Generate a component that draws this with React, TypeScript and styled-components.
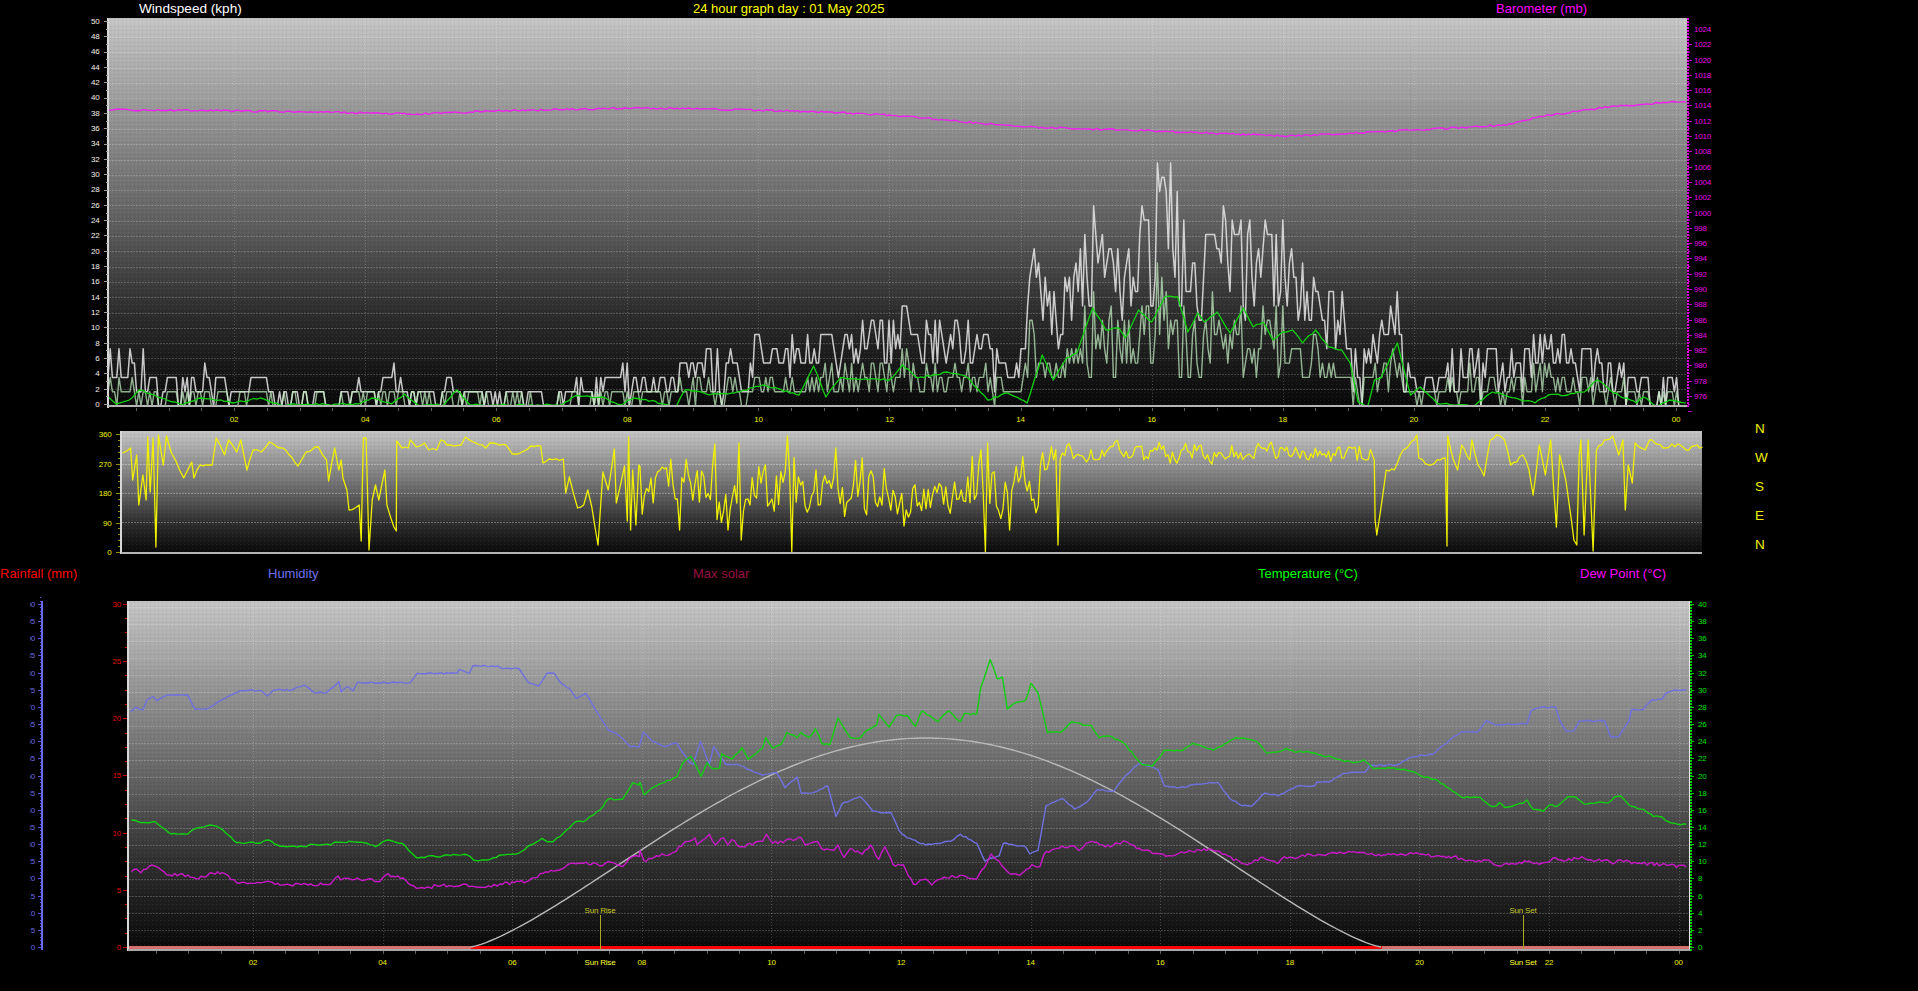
import React, { useMemo } from "react";
import styled, { createGlobalStyle } from "styled-components";

type Pt = [number, number];

const GlobalStyle = createGlobalStyle`
  html, body { margin: 0; background: #000; overflow: hidden; }
  body { font-family: "Liberation Sans", Arial, sans-serif; }
`;

const Page = styled.div`
  width: 1918px;
  height: 991px;
  display: flex;
  flex-direction: column;
  background: #000;
`;
const HeaderRow = styled.div<{ $cols: string; $height: number }>`
  display: grid;
  grid-template-columns: ${(p) => p.$cols};
  height: ${(p) => p.$height}px;
  line-height: ${(p) => p.$height}px;
`;
const HeaderLabel = styled.div<{ $color: string; $wide?: boolean }>`
  color: ${(p) => p.$color};
  font-size: ${(p) => (p.$wide ? 13.6 : 13)}px;
  white-space: nowrap;
`;
const DirectionRow = styled.div`
  display: flex;
  height: 140px;
`;
const CompassColumn = styled.div`
  display: flex;
  flex-direction: column;
  gap: 16px;
  padding-left: 35px;
`;
const CompassLetter = styled.div`
  color: #f0f000;
  font-size: 13.5px;
  line-height: 13px;
`;
const ChartSvg = styled.svg`
  display: block;
  flex: none;
  overflow: visible;
`;
const TickText = styled.text<{ $color: string; $anchor?: string }>`
  fill: ${(p) => p.$color};
  font-family: "Liberation Sans", Arial, sans-serif;
  font-size: 8px;
  letter-spacing: -0.2px;
  text-anchor: ${(p) => p.$anchor || "middle"};
`;
const Trace = styled.polyline<{ $color: string; $w?: number; $o?: number }>`
  fill: none;
  stroke: ${(p) => p.$color};
  stroke-width: ${(p) => p.$w || 1.3}px;
  stroke-opacity: ${(p) => p.$o || 1};
  stroke-linejoin: round;
`;
const Rule = styled.path<{ $color: string; $w?: number; $dash?: string }>`
  fill: none;
  stroke: ${(p) => p.$color};
  stroke-width: ${(p) => p.$w || 1}px;
  stroke-dasharray: ${(p) => p.$dash || "none"};
  shape-rendering: crispEdges;
`;

// seeded random so the picture stays the same on each load
const makeRand = (seed: number) => () => {
  seed = (seed + 0x6d2b79f5) | 0;
  let t = Math.imul(seed ^ (seed >>> 15), 1 | seed);
  t = (t + Math.imul(t ^ (t >>> 7), 61 | t)) ^ t;
  return ((t ^ (t >>> 14)) >>> 0) / 4294967296;
};

const H = (x1: number, x2: number, y: number) => `M${x1} ${y}H${x2}`;
const V = (x: number, y1: number, y2: number) => `M${x} ${y1}V${y2}`;
const toPoints = (pts: Pt[]) => pts.map((p) => `${p[0].toFixed(1)},${p[1].toFixed(1)}`).join(" ");
const range = (n: number) => Array.from({ length: n }, (_, i) => i);

const rough = (pts: Pt[], amp: number, step: number, seed: number): Pt[] => {
  const rand = makeRand(seed);
  const out: Pt[] = [];
  pts.forEach((p, i) => {
    out.push(p);
    const next = pts[i + 1];
    if (!next) return;
    const n = Math.floor((next[0] - p[0]) / step);
    for (let k = 1; k < n; k++) {
      const t = k / n;
      out.push([p[0] + (next[0] - p[0]) * t, p[1] + (next[1] - p[1]) * t + (rand() - 0.5) * amp]);
    }
  });
  return out;
};

// traced from zoomed crops: x scale 2.45, y scale given per crop
const crop = (pts: Pt[], ox: number, oy: number, sy: number): Pt[] =>
  pts.map((p) => [ox + p[0] / 2.45, oy + p[1] / sy] as Pt);

const topX = (h: number) => 103 + 65.54 * h;
const lowX = (h: number) => 123.4 + 64.8 * h;
const hours = range(12).map((i) => (i + 1) * 2);
const hourText = (h: number) => (h === 24 ? "00" : String(h).padStart(2, "0"));

const PRESSURE: Pt[] = [
  [0.08, 110], [2, 111], [3, 111.5], [4, 113], [4.8, 114], [5.4, 112.5], [6, 110.7], [7, 109.5], [8.2, 108],
  [10, 110], [11, 112], [12, 115], [12.5, 118], [14, 126.7], [15, 129], [16, 130.7], [18, 136], [19, 133.5],
  [20, 130], [21, 126.7], [21.5, 124], [21.9, 116.7], [23, 106.7], [24, 102], [24.15, 102],
];
const AVG_WIND: Pt[] = [
  [0.08, 397], [0.2, 404], [0.4, 400], [0.55, 390], [0.9, 398], [1.2, 405], [1.5, 398], [1.8, 400], [2, 403], [2.4, 398], [2.7, 405],
  [3.9, 404], [4.1, 398], [4.4, 404], [4.6, 394], [4.8, 405], [5.2, 405], [5.4, 390], [5.6, 405], [7, 405], [7.2, 396], [7.6, 397],
  [7.9, 405], [8.1, 398], [8.19, 399], [8.75, 406], [8.88, 390], [9.13, 392], [9.25, 395], [9.63, 393], [10.06, 385], [10.62, 395],
  [10.84, 366], [11.03, 397], [11.25, 378], [12, 380], [12.2, 365], [12.43, 378], [12.87, 372], [13.18, 377], [13.5, 400], [13.8, 393],
  [14.1, 403], [14.33, 355], [14.5, 380], [14.7, 358], [14.86, 353], [15.1, 308], [15.3, 330], [15.5, 328], [15.6, 338], [15.8, 310],
  [16, 322], [16.2, 297], [16.4, 297], [16.55, 332], [16.7, 313], [16.8, 322], [17, 312], [17.2, 333], [17.4, 308], [17.55, 327],
  [17.7, 322], [17.85, 340], [18, 332], [18.15, 330], [18.3, 343], [18.5, 330], [18.7, 347], [18.9, 350], [19.03, 363], [19.15, 402],
  [19.3, 406], [19.4, 380], [19.5, 378], [19.75, 343], [19.85, 370], [19.95, 395], [20.1, 387], [20.35, 403], [20.6, 405], [20.9, 406],
  [21.2, 392], [21.55, 398], [21.85, 403], [22.05, 395], [22.35, 395], [22.6, 392], [22.8, 380], [23.05, 393], [23.4, 403], [23.5, 397],
  [23.7, 406], [23.9, 400], [24.15, 403],
];
const GUST_TOP: Pt[] = [
  [0.1, 347], [0.4, 347], [0.6, 347], [0.8, 376], [1.3, 376], [1.55, 362], [1.8, 376], [2.5, 376], [2.7, 390], [3.7, 390], [3.9, 376],
  [4.2, 390], [4.45, 362], [4.8, 392], [5.25, 376], [5.5, 390], [6, 392], [6.25, 390], [7, 390], [7.3, 376], [7.7, 376], [8, 362], [8.4, 376],
  [8.8, 362], [9.2, 347], [10, 333], [10.5, 333], [11, 333], [11.6, 320], [12.2, 305], [12.7, 320], [13, 320], [13.5, 333], [14, 350],
  [14.2, 250], [14.5, 285], [14.9, 248], [15.1, 206], [15.5, 248], [15.85, 205], [16.1, 162], [16.3, 163], [16.5, 220], [17.1, 205],
  [17.5, 220], [18, 220], [18.3, 262], [18.9, 290], [19.1, 345], [19.5, 318], [19.75, 290], [19.9, 362], [20.3, 376], [20.6, 347],
  [21, 347], [21.5, 347], [22, 333], [22.3, 333], [22.6, 347], [23, 362], [24, 376], [24.15, 376],
];

const lerp = (pts: Pt[], x: number) => {
  for (let i = 0; i < pts.length - 1; i++) {
    if (x <= pts[i + 1][0]) {
      const t = (x - pts[i][0]) / (pts[i + 1][0] - pts[i][0]);
      return pts[i][1] + (pts[i + 1][1] - pts[i][1]) * t;
    }
  }
  return pts[pts.length - 1][1];
};

const buildWind = () => {
  const rand = makeRand(41);
  const gust: Pt[] = [];
  const speed: Pt[] = [];
  const levels: number[] = [];
  const level = 14.3;
  let held = 0;
  const count = Math.floor(1578 / 2.2);
  range(count).forEach((i) => {
    const x = 108 + i * 2.2;
    const n = (406 - lerp(GUST_TOP, (x - 103) / 65.54)) / level;
    if (rand() > (n > 5 ? 0.12 : 0.32)) {
      const low = n > 5 ? 0.42 * n : 0;
      held = Math.round(low + (n - low) * Math.pow(rand(), 0.85));
    }
    levels.push(Math.min(held, Math.round(n)));
  });
  // peaks of the envelope are real gusts
  GUST_TOP.forEach((p) => {
    const i = Math.round((topX(p[0]) - 108) / 2.2);
    if (levels[i] !== undefined) levels[i] = Math.round((406 - p[1]) / level);
  });
  levels.forEach((v, i) => {
    const x = 108 + i * 2.2;
    gust.push([x, 406 - v * level]);
    const s = v < 2 ? (rand() > 0.55 ? v : 0) : Math.round(v * (0.22 + 0.42 * rand()));
    speed.push([x, 406 - s * level]);
  });
  return { gust, speed };
};

const DIR_START: Pt[] = [
  [300, 453], [320, 448], [325, 480], [335, 455], [340, 505], [350, 475], [358, 500], [362, 437], [368, 492], [375, 438], [382, 547], [388, 435],
  [400, 465], [408, 436], [420, 453], [440, 470], [450, 478], [470, 462], [475, 478], [490, 465], [520, 465], [530, 438], [550, 455], [560, 440],
  [580, 452], [590, 440], [605, 470], [620, 450], [640, 452], [660, 442], [700, 450], [730, 466], [750, 452], [780, 447], [800, 460], [805, 481],
  [820, 448], [830, 470], [836, 460], [840, 478], [850, 490], [855, 510], [880, 505], [885, 541], [890, 438], [897, 438], [904, 550], [912, 500],
  [920, 485], [928, 500], [943, 470], [948, 505], [965, 527], [971, 531], [972, 441], [985, 448], [1000, 448], [1005, 440], [1020, 447], [1040, 443],
  [1050, 450], [1070, 450], [1080, 440], [1095, 445], [1130, 445], [1140, 437], [1190, 448], [1200, 443], [1240, 445], [1255, 454], [1270, 454],
  [1300, 446], [1325, 446], [1330, 463], [1345, 459], [1380, 459], [1386, 493], [1395, 477], [1415, 508], [1430, 505], [1440, 490], [1450, 507],
  [1465, 545], [1477, 472], [1490, 490], [1505, 449], [1510, 503], [1530, 466], [1537, 521], [1540, 437], [1545, 530], [1550, 470], [1558, 525], [1565, 465],
];
const DIR_END: Pt[] = [
  [236, 460], [238, 520], [242, 535], [255, 500], [265, 470], [285, 470], [300, 455], [340, 435], [345, 458], [370, 465], [410, 458], [414, 546], [416, 436],
  [430, 460], [440, 470], [450, 445], [470, 460], [475, 440], [490, 465], [505, 476], [520, 440], [535, 435], [555, 440], [570, 465], [600, 455], [615, 470],
  [625, 495], [640, 445], [655, 475], [668, 440], [682, 527], [690, 455], [705, 480], [712, 500], [725, 540], [732, 545], [738, 455], [742, 440], [750, 535],
  [760, 440], [772, 551], [780, 450], [800, 440], [820, 436], [835, 455], [845, 440], [851, 510], [858, 465], [868, 483], [875, 443], [900, 450], [910, 440],
  [950, 448], [980, 444], [1000, 450], [1020, 446], [1040, 447],
];
const DIR_SPIKES: Pt[] = [
  [679, 530], [715, 444], [728, 530], [740, 443], [741, 540], [787, 436], [791, 552], [836, 448], [905, 526], [986, 552], [987, 443], [1009, 530], [1059, 545],
];

const buildDirection = (): Pt[] => {
  const rand = makeRand(7);
  const mid: Pt[] = [];
  let last = 490;
  for (let x = 640; x < 1372; x += 2.2) {
    let c = 453, a = 12;
    if (x < 885) { c = 488; a = 40; }
    else if (x < 960) { c = 498; a = 24; }
    else if (x < 1040) { c = 486; a = 44; }
    else if (x < 1064) { c = 458; a = 16; }
    const r = 2 * rand() - 1;
    last = 0.25 * last + 0.75 * (c + a * r * (rand() > 0.5 ? 1.1 : 0.75));
    mid.push([x, last]);
  }
  DIR_SPIKES.forEach((s) => {
    const i = Math.round((s[0] - 640) / 2.2);
    mid[i] = [mid[i][0], s[1]];
  });
  return [
    ...rough(crop(DIR_START, 0, 0, 1), 3, 3, 3),
    ...mid,
    ...rough(DIR_END.map((p) => [1278 + p[0] / 2.45, p[1]] as Pt), 4, 2.6, 5),
  ];
};

const HUMIDITY: Pt[] = [
  ...crop([[320, 875], [332, 862], [350, 870], [360, 840], [375, 830], [385, 842], [400, 830], [420, 825], [460, 825], [478, 868], [505, 868], [530, 850], [560, 828], [590, 812], [640, 812], [655, 828], [670, 810], [715, 810], [745, 795], [770, 818], [800, 818], [830, 785], [836, 815], [850, 800], [865, 812], [875, 788], [1005, 788], [1022, 760], [1120, 760], [1125, 748], [1150, 760], [1158, 738], [1220, 738], [1230, 746], [1272, 746], [1295, 788], [1320, 798], [1340, 760], [1358, 760], [1375, 790], [1395, 805], [1412, 835], [1435, 820], [1450, 850], [1475, 900]], 0, 420, 3),
  ...crop([[1490, 30], [1520, 50], [1545, 80], [1566, 80]], 0, 720, 3),
  ...crop([[8, 845], [30, 870], [60, 885], [90, 875], [120, 928], [130, 935], [148, 870], [170, 935], [180, 885], [210, 935], [240, 935], [270, 950], [300, 965], [335, 958], [355, 1000], [385, 970], [395, 1015], [420, 1015], [460, 995], [480, 1080], [495, 1045], [540, 1025], [570, 1065], [600, 1070], [615, 1070], [635, 1120], [655, 1140], [700, 1160], [760, 1150], [785, 1130], [825, 1155], [845, 1205], [880, 1190], [890, 1155], [945, 1165], [955, 1185], [975, 1175], [995, 1050], [1035, 1030], [1065, 1060], [1095, 1040], [1120, 1005], [1160, 1010], [1190, 965], [1225, 930], [1270, 950], [1285, 995], [1320, 1000], [1395, 985], [1415, 985], [1445, 1030], [1475, 1050], [1500, 1050], [1530, 1015], [1560, 1020]], 640, 430, 2.795),
  ...crop([[0, 228], [30, 208], [50, 198], [90, 198], [95, 186], [125, 186], [160, 160], [215, 155], [225, 135], [290, 135], [320, 115], [350, 105], [380, 103], [400, 80], [425, 55], [450, 35], [490, 35], [510, 3], [540, 15], [560, 12], [610, 12], [620, -28], [645, -38], [680, -38], [690, 0], [705, 32], [725, 32], [738, 3], [800, 3], [815, 50], [835, 50], [860, 3], [865, -30], [895, -32], [915, -60], [940, -62], [950, -80], [970, -90], [1000, -90]], 1278, 720, 3),
];
const TEMPERATURE: Pt[] = [
  ...crop([[322, 300], [345, 308], [380, 305], [400, 325], [420, 342], [460, 342], [480, 325], [515, 315], [540, 325], [580, 368], [640, 368], [658, 360], [680, 375], [700, 380], [750, 380], [760, 373], [810, 375], [820, 366], [870, 366], [900, 370], [920, 380], [950, 360], [965, 365], [985, 370], [1020, 413], [1040, 413], [1060, 407], [1080, 410], [1090, 405], [1145, 405], [1160, 420], [1195, 420], [1230, 405], [1270, 400], [1300, 375], [1328, 355], [1340, 365], [1355, 365], [1380, 340], [1410, 305], [1430, 305], [1445, 290], [1470, 270], [1490, 237], [1525, 238], [1550, 188], [1566, 195]], 0, 720, 3),
  ...crop([[0, 985], [10, 1020], [30, 1000], [60, 985], [90, 970], [105, 930], [125, 912], [150, 968], [165, 930], [175, 945], [195, 945], [200, 905], [225, 920], [250, 888], [265, 920], [300, 890], [308, 860], [325, 890], [345, 880], [360, 845], [385, 860], [395, 845], [415, 860], [430, 835], [445, 875], [465, 880], [485, 805], [515, 860], [540, 860], [555, 840], [580, 825], [585, 795], [610, 830], [628, 798], [655, 798], [675, 828], [690, 785], [730, 815], [755, 785], [785, 815], [795, 792], [825, 795], [835, 720], [858, 642], [875, 695], [888, 690], [900, 780], [915, 765], [945, 755], [958, 708], [975, 735], [985, 780], [998, 845], [1030, 845], [1058, 815], [1090, 825], [1105, 825], [1125, 860], [1150, 855], [1185, 875], [1230, 935], [1255, 940], [1285, 895], [1330, 895], [1355, 875], [1405, 895], [1460, 860], [1510, 870], [1535, 903], [1560, 900]], 640, 430, 2.795),
  ...crop([[0, 95], [20, 85], [40, 95], [75, 95], [105, 105], [150, 118], [185, 128], [210, 120], [235, 147], [270, 143], [310, 148], [340, 160], [360, 172], [385, 178], [420, 205], [450, 232], [495, 232], [520, 258], [535, 258], [542, 248], [555, 262], [600, 250], [610, 240], [625, 268], [650, 274], [665, 255], [685, 258], [710, 230], [730, 232], [750, 252], [780, 248], [810, 248], [825, 230], [840, 228], [860, 255], [900, 272], [920, 290], [940, 290], [950, 302], [980, 313], [1000, 313]], 1278, 720, 3),
];
const DEW_POINT: Pt[] = [
  ...crop([[322, 455], [335, 448], [345, 458], [372, 435], [395, 450], [415, 465], [460, 465], [480, 476], [505, 470], [515, 458], [545, 458], [580, 488], [650, 485], [680, 490], [710, 495], [745, 490], [755, 495], [810, 492], [828, 468], [835, 480], [870, 478], [900, 478], [930, 485], [945, 465], [975, 468], [1020, 505], [1040, 505], [1070, 497], [1130, 495], [1190, 502], [1225, 492], [1290, 485], [1330, 460], [1370, 450], [1405, 430], [1460, 430], [1470, 438], [1490, 425], [1525, 440], [1550, 410], [1566, 410]], 0, 720, 3),
  ...crop([[0, 1175], [10, 1205], [40, 1190], [75, 1185], [115, 1150], [135, 1140], [140, 1160], [170, 1130], [185, 1160], [205, 1140], [215, 1160], [225, 1145], [245, 1165], [300, 1150], [310, 1130], [325, 1155], [395, 1140], [405, 1160], [435, 1150], [445, 1170], [475, 1175], [485, 1160], [500, 1195], [515, 1170], [545, 1185], [565, 1160], [585, 1200], [600, 1165], [620, 1215], [645, 1215], [670, 1270], [700, 1255], [715, 1272], [745, 1250], [790, 1245], [825, 1255], [850, 1210], [860, 1185], [885, 1215], [905, 1240], [930, 1245], [960, 1215], [980, 1220], [990, 1185], [1020, 1170], [1060, 1162], [1075, 1175], [1105, 1150], [1140, 1165], [1190, 1150], [1230, 1175], [1275, 1185], [1300, 1190], [1340, 1180], [1400, 1172], [1440, 1190], [1475, 1212], [1500, 1210], [1520, 1195], [1560, 1210]], 640, 430, 2.795),
  ...crop([[0, 430], [15, 410], [50, 412], [60, 405], [110, 405], [150, 397], [210, 397], [235, 405], [300, 402], [350, 403], [400, 410], [430, 410], [460, 423], [510, 420], [525, 430], [540, 437], [560, 430], [610, 425], [640, 433], [680, 413], [700, 423], [745, 410], [760, 420], [800, 420], [820, 432], [840, 420], [880, 430], [940, 433], [1000, 441]], 1278, 720, 3),
];

const solarCurve = (): Pt[] =>
  range(183).map((i) => {
    const x = 471 + i * 5;
    return [x, 947 - 209 * Math.pow(Math.sin((Math.PI * (x - 471)) / 910), 1.3)] as Pt;
  });

function PlotDefs({ id }: { id: string }) {
  return (
    <defs>
      <linearGradient id={`${id}-fade`} x1="0" y1="0" x2="0" y2="1">
        <stop offset="0" stopColor="#c4c4c4" />
        <stop offset="0.25" stopColor="#949494" />
        <stop offset="0.5" stopColor="#646464" />
        <stop offset="0.75" stopColor="#2e2e2e" />
        <stop offset="1" stopColor="#080808" />
      </linearGradient>
      <pattern id={`${id}-dither`} width="4" height="4" patternUnits="userSpaceOnUse">
        <rect x="0" y="0" width="1" height="1" fill="#fff" fillOpacity="0.07" />
        <rect x="2" y="2" width="1" height="1" fill="#000" fillOpacity="0.1" />
      </pattern>
    </defs>
  );
}

function PlotBack({ id, x, y, w, h }: { id: string; x: number; y: number; w: number; h: number }) {
  return (
    <>
      <PlotDefs id={id} />
      <rect x={x} y={y} width={w} height={h} fill={`url(#${id}-fade)`} />
      <rect x={x} y={y} width={w} height={h} fill={`url(#${id}-dither)`} shapeRendering="crispEdges" />
    </>
  );
}

const GRID = "rgba(255,255,255,0.2)";

function WindChart() {
  const { gust, speed } = useMemo(buildWind, []);
  const grid = range(25).map((k) => H(109, 1687, Math.round(404.3 - 15.3 * (k + 1)))).join("");
  const verts = hours.map((h) => V(Math.round(topX(h)), 18, 407)).join("");
  const leftTicks = range(51).map((k) => H(k % 2 ? 106 : 104, 108, Math.round(404 - 7.66 * k))).join("");
  const rightTicks = range(50).map((k) => H(1688, k % 2 ? 1690 : 1692, Math.round(396 - 7.646 * (k - 2)))).join("");
  const minor = range(48).map((k) => V(Math.round(topX(0.5 * (k + 1))), 408, 411)).join("");
  return (
    <ChartSvg width={1918} height={404} viewBox="0 18 1918 404">
      <PlotBack id="wind" x={108} y={18} w={1579} h={389} />
      <Rule d={grid} $color={GRID} $dash="2 1" />
      <Rule d={verts} $color={GRID} $dash="1 2" />
      <Trace points={toPoints(gust)} $color="#e8e8e8" $w={1.5} $o={0.85} />
      <Trace points={toPoints(speed)} $color="#c4f0c4" $w={1.4} $o={0.72} />
      <Trace points={toPoints(rough(AVG_WIND.map((p) => [topX(p[0]), p[1]] as Pt), 2, 3, 11))} $color="#10d010" />
      <Trace points={toPoints(rough(PRESSURE.map((p) => [topX(p[0]), p[1]] as Pt), 1.8, 2.6, 13))} $color="#ee22ee" $w={1.4} />
      <Rule d={V(108, 18, 408)} $color="#d8d8d8" $w={2} />
      <Rule d={H(108, 1687, 406)} $color="#b4b4b4" $w={2} />
      <Rule d={leftTicks} $color="#a0a0a0" />
      <Rule d={V(1688, 18, 408)} $color="#e000e0" $w={2} $dash="2 1" />
      <Rule d={rightTicks} $color="#c000c0" />
      <Rule d={minor} $color="#606060" />
      {range(26).map((k) => (
        <TickText key={k} x={99.5} y={404 - 15.33 * k + 3} $color="#f4f0e8" $anchor="end">
          {k * 2}
        </TickText>
      ))}
      {range(25).map((k) => (
        <TickText key={k} x={1694} y={396 - 15.29 * k + 3} $color="#e800e8" $anchor="start">
          {976 + k * 2}
        </TickText>
      ))}
      {hours.map((h) => (
        <TickText key={h} x={topX(h)} y={422} $color="#f0f000">
          {hourText(h)}
        </TickText>
      ))}
    </ChartSvg>
  );
}

function DirectionChart() {
  const dir = useMemo(buildDirection, []);
  const ticks = range(21).map((k) => H(k % 5 === 0 ? 116 : 118, 120, Math.round(552 - 5.9 * k))).join("");
  const grid = [464, 493, 522].map((y) => H(122, 1702, y)).join("");
  const labels = [0, 90, 180, 270, 360];
  return (
    <ChartSvg width={1720} height={140} viewBox="0 422 1720 140">
      <PlotBack id="dir" x={121} y={431} w={1581} h={122} />
      <Rule d={grid} $color="rgba(255,255,255,0.3)" $dash="2 1" />
      <Trace points={toPoints(dir)} $color="#f0f000" $w={1.3} />
      <Rule d={V(121, 431, 554)} $color="#d8d8d8" $w={2} />
      <Rule d={H(121, 1702, 553)} $color="#b4b4b4" $w={2} />
      <Rule d={ticks} $color="#909000" />
      {labels.map((v, k) => (
        <TickText key={v} x={111.5} y={555 - 29.5 * k} $color="#f0f000" $anchor="end">
          {v}
        </TickText>
      ))}
    </ChartSvg>
  );
}

function SunMarker({ x, label }: { x: number; label: string }) {
  return (
    <>
      <Rule d={V(x, 915, 951)} $color="#a8a820" />
      <TickText x={x} y={913} $color="#c8c820">
        {label}
      </TickText>
      <TickText x={x} y={965} $color="#ffff30">
        {label}
      </TickText>
    </>
  );
}

function SolarChart() {
  const grid = range(20).map((k) => H(129, 1689, 947 - 17 * (k + 1))).join("");
  const verts = hours.map((h) => V(Math.round(lowX(h)), 601, 955)).join("");
  const minor = range(48).map((k) => V(Math.round(lowX(0.5 * (k + 1))), 951, 954)).join("");
  const rainTicks = range(25).map((k) => H(k % 4 === 0 ? 123 : 125, 127, Math.round(947 - 14.3 * k))).join("");
  const humTicks = range(103).map((k) => H(k % 5 === 0 ? 38 : 39.5, 41, Math.round(947 - 3.43 * k))).join("");
  const tempTicks = range(21).map((k) => H(1691, 1694, Math.round(947 - 17.15 * k))).join("");
  return (
    <ChartSvg width={1918} height={405} viewBox="0 586 1918 405">
      <defs>
        <clipPath id="hum-labels">
          <rect x={29.8} y={590} width={10} height={370} />
        </clipPath>
      </defs>
      <PlotBack id="solar" x={128} y={601} w={1562} h={350} />
      <Rule d={grid} $color={GRID} $dash="2 1" />
      <Rule d={verts} $color={GRID} $dash="1 2" />
      <Rule d={H(129, 1689, 947)} $color="#ff0000" $w={3} />
      <Rule d={`${H(129, 471, 947)}${H(1382, 1689, 947)}`} $color="#d87070" $w={3} />
      <Trace points={toPoints(solarCurve())} $color="#b8b8b8" $w={1.4} />
      <Trace points={toPoints(rough(HUMIDITY, 1.5, 2.6, 17))} $color="#7070e0" $w={1.4} />
      <Trace points={toPoints(rough(TEMPERATURE, 1.6, 2.6, 19))} $color="#10d010" $w={1.4} />
      <Trace points={toPoints(rough(DEW_POINT, 3.2, 2.4, 23))} $color="#c818c8" $w={1.4} />
      <SunMarker x={600} label="Sun Rise" />
      <SunMarker x={1523} label="Sun Set" />
      <Rule d={V(128, 601, 951)} $color="#d8d8d8" $w={2} />
      <Rule d={V(1689, 601, 951)} $color="#e8e8e8" />
      <Rule d={H(128, 1690, 950)} $color="#a8a8a8" $w={2} />
      <Rule d={V(1691, 601, 951)} $color="#00d000" $w={2} $dash="2 1" />
      <Rule d={tempTicks} $color="#00c000" />
      <Rule d={rainTicks} $color="#c00000" />
      <Rule d={minor} $color="#606060" />
      <Rule d={V(42, 601, 950)} $color="#6a6af0" $w={2} />
      <Rule d={humTicks} $color="#5858d0" />
      {range(7).map((k) => (
        <TickText key={k} x={121} y={950 - 57.2 * k} $color="#e00000" $anchor="end">
          {k * 5}
        </TickText>
      ))}
      <g clipPath="url(#hum-labels)">
        {range(21).map((k) => (
          <TickText key={k} x={35} y={950 - 17.15 * k} $color="#6a6ae8" $anchor="end">
            {k * 5}
          </TickText>
        ))}
      </g>
      {range(21).map((k) => (
        <TickText key={k} x={1698} y={950 - 17.15 * k} $color="#00e000" $anchor="start">
          {k * 2}
        </TickText>
      ))}
      {hours.map((h) => (
        <TickText key={h} x={lowX(h)} y={965} $color="#f0f000">
          {hourText(h)}
        </TickText>
      ))}
    </ChartSvg>
  );
}

export default function App() {
  return (
    <Page>
      <GlobalStyle />
      <HeaderRow $cols="139px 554px 803px auto" $height={18}>
        <span />
        <HeaderLabel $color="#ffffff" $wide>Windspeed (kph)</HeaderLabel>
        <HeaderLabel $color="#ffff00">24 hour graph day : 01 May 2025</HeaderLabel>
        <HeaderLabel $color="#ff00ff">Barometer (mb)</HeaderLabel>
      </HeaderRow>
      <WindChart />
      <DirectionRow>
        <DirectionChart />
        <CompassColumn>
          {["N", "W", "S", "E", "N"].map((c, i) => (
            <CompassLetter key={i}>{c}</CompassLetter>
          ))}
        </CompassColumn>
      </DirectionRow>
      <HeaderRow $cols="268px 425px 565px 322px auto" $height={24}>
        <HeaderLabel $color="#ff0000">Rainfall (mm)</HeaderLabel>
        <HeaderLabel $color="#7070f0">Humidity</HeaderLabel>
        <HeaderLabel $color="#981040">Max solar</HeaderLabel>
        <HeaderLabel $color="#00ff00">Temperature (°C)</HeaderLabel>
        <HeaderLabel $color="#ff00ff">Dew Point (°C)</HeaderLabel>
      </HeaderRow>
      <SolarChart />
    </Page>
  );
}
